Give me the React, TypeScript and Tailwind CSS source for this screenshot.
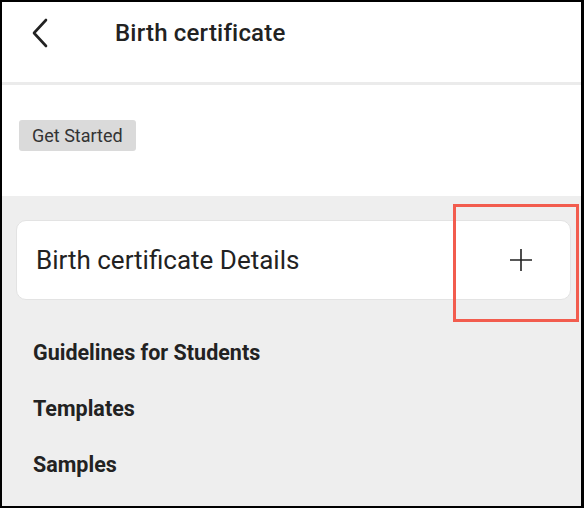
import React from 'react';

const App: React.FC = () => {
    return (
        <div className="w-[584px] h-[508px] bg-white border-2 border-r-[3px] border-black flex flex-col relative overflow-hidden" style={{ fontFamily: 'Roboto, "Noto Sans", sans-serif' }}>
            {/* header */}
            <div className="h-[80px] pb-[18px] flex items-center shrink-0">
                <div className="w-[113px] pl-[27px] flex items-center">
                    <svg width="24" height="30" viewBox="0 0 24 30" fill="none" stroke="#222" strokeWidth="2.6" strokeLinecap="round" strokeLinejoin="round">
                        <path d="M17 2 L5 15 L17 28" />
                    </svg>
                </div>
                <h1 className="text-[24px] font-medium text-[#222] leading-[28px] tracking-[0.2px]">Birth certificate</h1>
            </div>
            <div className="h-[3px] bg-[#ebebeb] shrink-0" />

            {/* get started */}
            <div className="h-[111px] shrink-0 pt-[35px] pl-[17px]">
                <span className="inline-flex items-center h-[31px] px-[13px] rounded-[3px] bg-[#dadada] text-[18px] text-[#333]">Get Started</span>
            </div>

            {/* body */}
            <div className="flex-1 bg-[#eeeeee] pt-[24px]">
                <div className="ml-[14px] mr-[10px] h-[80px] bg-white rounded-[10px] border border-[#e3e3e3] flex items-center justify-between pl-[19px] pr-[38px]">
                    <span className="text-[26px] text-[#222] leading-[30px]">Birth certificate Details</span>
                    <svg width="22" height="22" viewBox="0 0 22 22" stroke="#222" strokeWidth="1.6">
                        <path d="M11 0 V22 M0 11 H22" />
                    </svg>
                </div>
                <div className="flex flex-col pl-[31px] pt-[40px] gap-[31px] text-[21.5px] font-bold text-[#222] leading-[25px]">
                    <span>Guidelines for Students</span>
                    <span>Templates</span>
                    <span>Samples</span>
                </div>
            </div>

            {/* highlight box */}
            <div className="absolute left-[451px] top-[202px] w-[126px] h-[118px] border-[3px] border-[#f25c4e]" />
        </div>
    );
};

export default App;
